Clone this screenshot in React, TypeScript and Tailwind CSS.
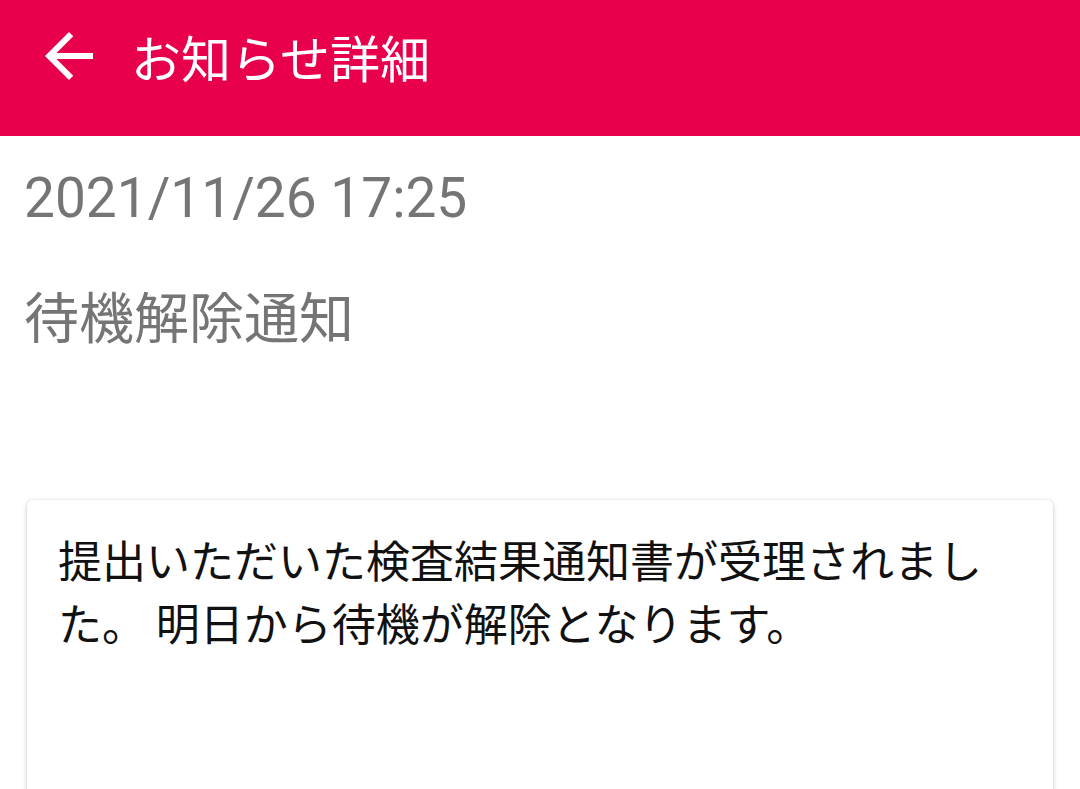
import React from 'react';

const ArrowBack = () => (
  <svg viewBox="0 0 24 24" className="w-[72px] h-[72px]" fill="white">
    <path d="M20 11H7.83l5.59-5.59L12 4l-8 8 8 8 1.41-1.41L7.83 13H20v-2z" />
  </svg>
);

const App = () => {
  return (
    <div className="min-h-screen bg-white overflow-hidden font-['Roboto','Noto_Sans_CJK_JP',sans-serif]">
      {/* Header */}
      <div className="h-[136px] bg-[#e8004c] flex items-center pl-[33px] pb-[24px]">
        <ArrowBack />
        <h1 className="ml-[26px] text-white text-[50px] leading-none font-['Noto_Sans_CJK_JP',sans-serif]">
          お知らせ詳細
        </h1>
      </div>

      {/* Meta */}
      <div className="px-[24px]">
        <div className="pt-[30px] text-[55px] leading-[64px] text-[#757575]">
          2021/11/26 17:25
        </div>
        <div className="mt-[52px] text-[55px] leading-[64px] text-[#757575] font-['Noto_Sans_CJK_JP',sans-serif]">
          待機解除通知
        </div>
      </div>

      {/* Body card */}
      <div className="mt-[154px] ml-[27px] w-[1026px] h-[400px] bg-white rounded-[6px] shadow-[0_1px_4px_rgba(0,0,0,0.25)] px-[31px] pt-[28px]">
        <p className="text-[44px] leading-[63px] text-[#111111] font-['Noto_Sans_CJK_JP',sans-serif] break-all">
          提出いただいた検査結果通知書が受理されました。 明日から待機が解除となります。
        </p>
      </div>
    </div>
  );
};

export default App;
